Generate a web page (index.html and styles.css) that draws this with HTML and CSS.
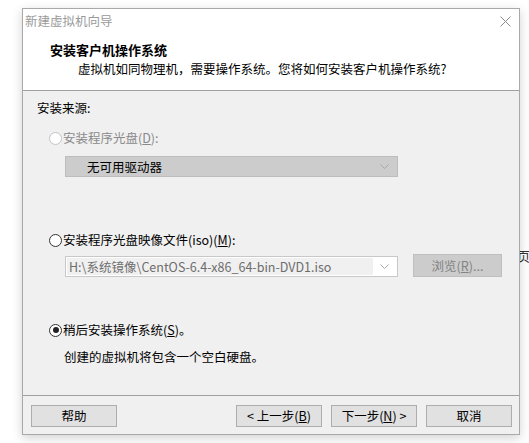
FILE: index.html
```html
<!DOCTYPE html>
<html lang="zh-CN">
<head>
<meta charset="utf-8">
<title>新建虚拟机向导</title>
<link rel="stylesheet" href="styles.css">
</head>
<body>
<span class="behind">页</span>
<div class="dialog">
  <div class="titlebar">
    <span class="title">新建虚拟机向导</span>
    <svg class="close" width="11" height="11" viewBox="0 0 11 11"><path d="M0.5 0.5 L10.5 10.5 M10.5 0.5 L0.5 10.5" stroke="#8a8a8a" stroke-width="1" fill="none"/></svg>
  </div>
  <div class="header">
    <div class="h-title">安装客户机操作系统</div>
    <div class="h-sub">虚拟机如同物理机，需要操作系统。您将如何安装客户机操作系统?</div>
  </div>
  <div class="content">
    <div class="label">安装来源:</div>
    <div class="radio-row disabled r1"><span class="radio"></span><span>安装程序光盘(<u>D</u>):</span></div>
    <div class="combo combo-disabled">
      <span class="combo-text">无可用驱动器</span>
      <svg class="chev" width="9" height="5" viewBox="0 0 9 5"><path d="M0.5 0.5 L4.5 4.5 L8.5 0.5" stroke="#a8a8a8" stroke-width="1" fill="none"/></svg>
    </div>
    <div class="radio-row r2"><span class="radio"></span><span>安装程序光盘映像文件(iso)(<u>M</u>):</span></div>
    <div class="iso-row">
      <div class="combo combo-iso">
        <span class="iso-field">H:\系统镜像\CentOS-6.4-x86_64-bin-DVD1.iso</span>
        <svg class="chev" width="9" height="5" viewBox="0 0 9 5"><path d="M0.5 0.5 L4.5 4.5 L8.5 0.5" stroke="#a8a8a8" stroke-width="1" fill="none"/></svg>
      </div>
      <div class="btn btn-disabled">浏览(<u>R</u>)...</div>
    </div>
    <div class="radio-row r3"><span class="radio checked"></span><span>稍后安装操作系统(<u>S</u>)。</span></div>
    <div class="desc">创建的虚拟机将包含一个空白硬盘。</div>
  </div>
  <div class="footer">
    <div class="btn">帮助</div>
    <div class="spacer"></div>
    <div class="btn">&lt; 上一步(<u>B</u>)</div>
    <div class="btn">下一步(<u>N</u>) &gt;</div>
    <div class="btn">取消</div>
  </div>
</div>
</body>
</html>
```

FILE: styles.css
```css
* { box-sizing: border-box; }

html, body {
  margin: 0;
  padding: 0;
  background: #ffffff;
  width: 529px;
  height: 443px;
  overflow: hidden;
}

body {
  position: relative;
  font-family: "Noto Sans CJK SC", "Microsoft YaHei", sans-serif;
  font-size: 12.5px;
  color: #000;
}

.behind {
  position: absolute;
  left: 517px;
  top: 246px;
  font-size: 13px;
  color: #333;
  z-index: 0;
}

.dialog {
  position: relative;
  z-index: 1;
  margin: 8px 0 0 22px;
  width: 498px;
  height: 427px;
  border: 1px solid #a9a9a9;
  background: #f0f0f0;
  box-shadow: 0 3px 10px rgba(0, 0, 0, 0.18);
  display: flex;
  flex-direction: column;
}

.titlebar {
  height: 24px;
  background: #fff;
  display: flex;
  align-items: center;
  justify-content: space-between;
  padding: 0 8px 0 2px;
}

.title {
  color: #9a9a9a;
  font-size: 12.5px;
  line-height: 24px;
}

.close { display: block; }

.header {
  background: #fff;
  padding: 7px 0 12px 0;
  border-bottom: 1px solid #a0a0a0;
}

.h-title {
  font-weight: bold;
  font-size: 13px;
  line-height: 20px;
  padding-left: 27px;
}

.h-sub {
  line-height: 18px;
  padding-left: 55px;
}

.content {
  flex: 1;
  padding: 8px 0 0 14px;
}

.label { line-height: 18px; }

.radio-row {
  display: flex;
  align-items: center;
  line-height: 18px;
  margin-left: 12px;
}

.radio {
  width: 13px;
  height: 13px;
  border-radius: 50%;
  border: 1px solid #333;
  background: #fff;
  margin-right: 1px;
  display: flex;
  align-items: center;
  justify-content: center;
  flex: none;
}

.radio.checked::after {
  content: "";
  width: 6px;
  height: 6px;
  border-radius: 50%;
  background: #222;
}

.disabled { color: #8a8a8a; }
.disabled .radio { border-color: #c4c4c4; }

.r1 { margin-top: 12px; }
.r2 { margin-top: 54px; }
.r3 { margin-top: 44px; }

.combo {
  width: 333px;
  height: 21px;
  display: flex;
  align-items: center;
  border: 1px solid #c2c2c2;
}

.combo-disabled {
  margin: 9px 0 0 28px;
  background: #cccccc;
  border-color: #bdbdbd;
}

.combo-text {
  flex: 1;
  padding-left: 21px;
  line-height: 19px;
}

.chev {
  display: block;
  margin: 0 8px 0 0;
}

.iso-row {
  display: flex;
  align-items: flex-end;
  margin: 5px 0 0 28px;
}

.combo-iso {
  background: #fff;
  border-color: #c8c8c8;
  padding-left: 1px;
}

.iso-field {
  width: 306px;
  height: 17px;
  display: flex;
  align-items: center;
  background: #f0f0f0;
  color: #6d6d6d;
  padding-left: 2px;
  margin-right: 7px;
  white-space: nowrap;
}

.btn {
  width: 86px;
  height: 22px;
  line-height: 20px;
  text-align: center;
  background: #e1e1e1;
  border: 1px solid #adadad;
  white-space: nowrap;
}

.btn-disabled {
  width: 89px;
  height: 23px;
  line-height: 21px;
  margin-left: 15px;
  background: #cccccc;
  border-color: #bfbfbf;
  color: #838383;
}

.desc {
  margin: 9px 0 0 27px;
  line-height: 18px;
}

.footer {
  border-top: 1px solid #a0a0a0;
  display: flex;
  gap: 9px;
  padding: 9px 7px 7px 8px;
}

.spacer { flex: 1; }

u { text-decoration: underline; text-underline-offset: 1px; }
```
